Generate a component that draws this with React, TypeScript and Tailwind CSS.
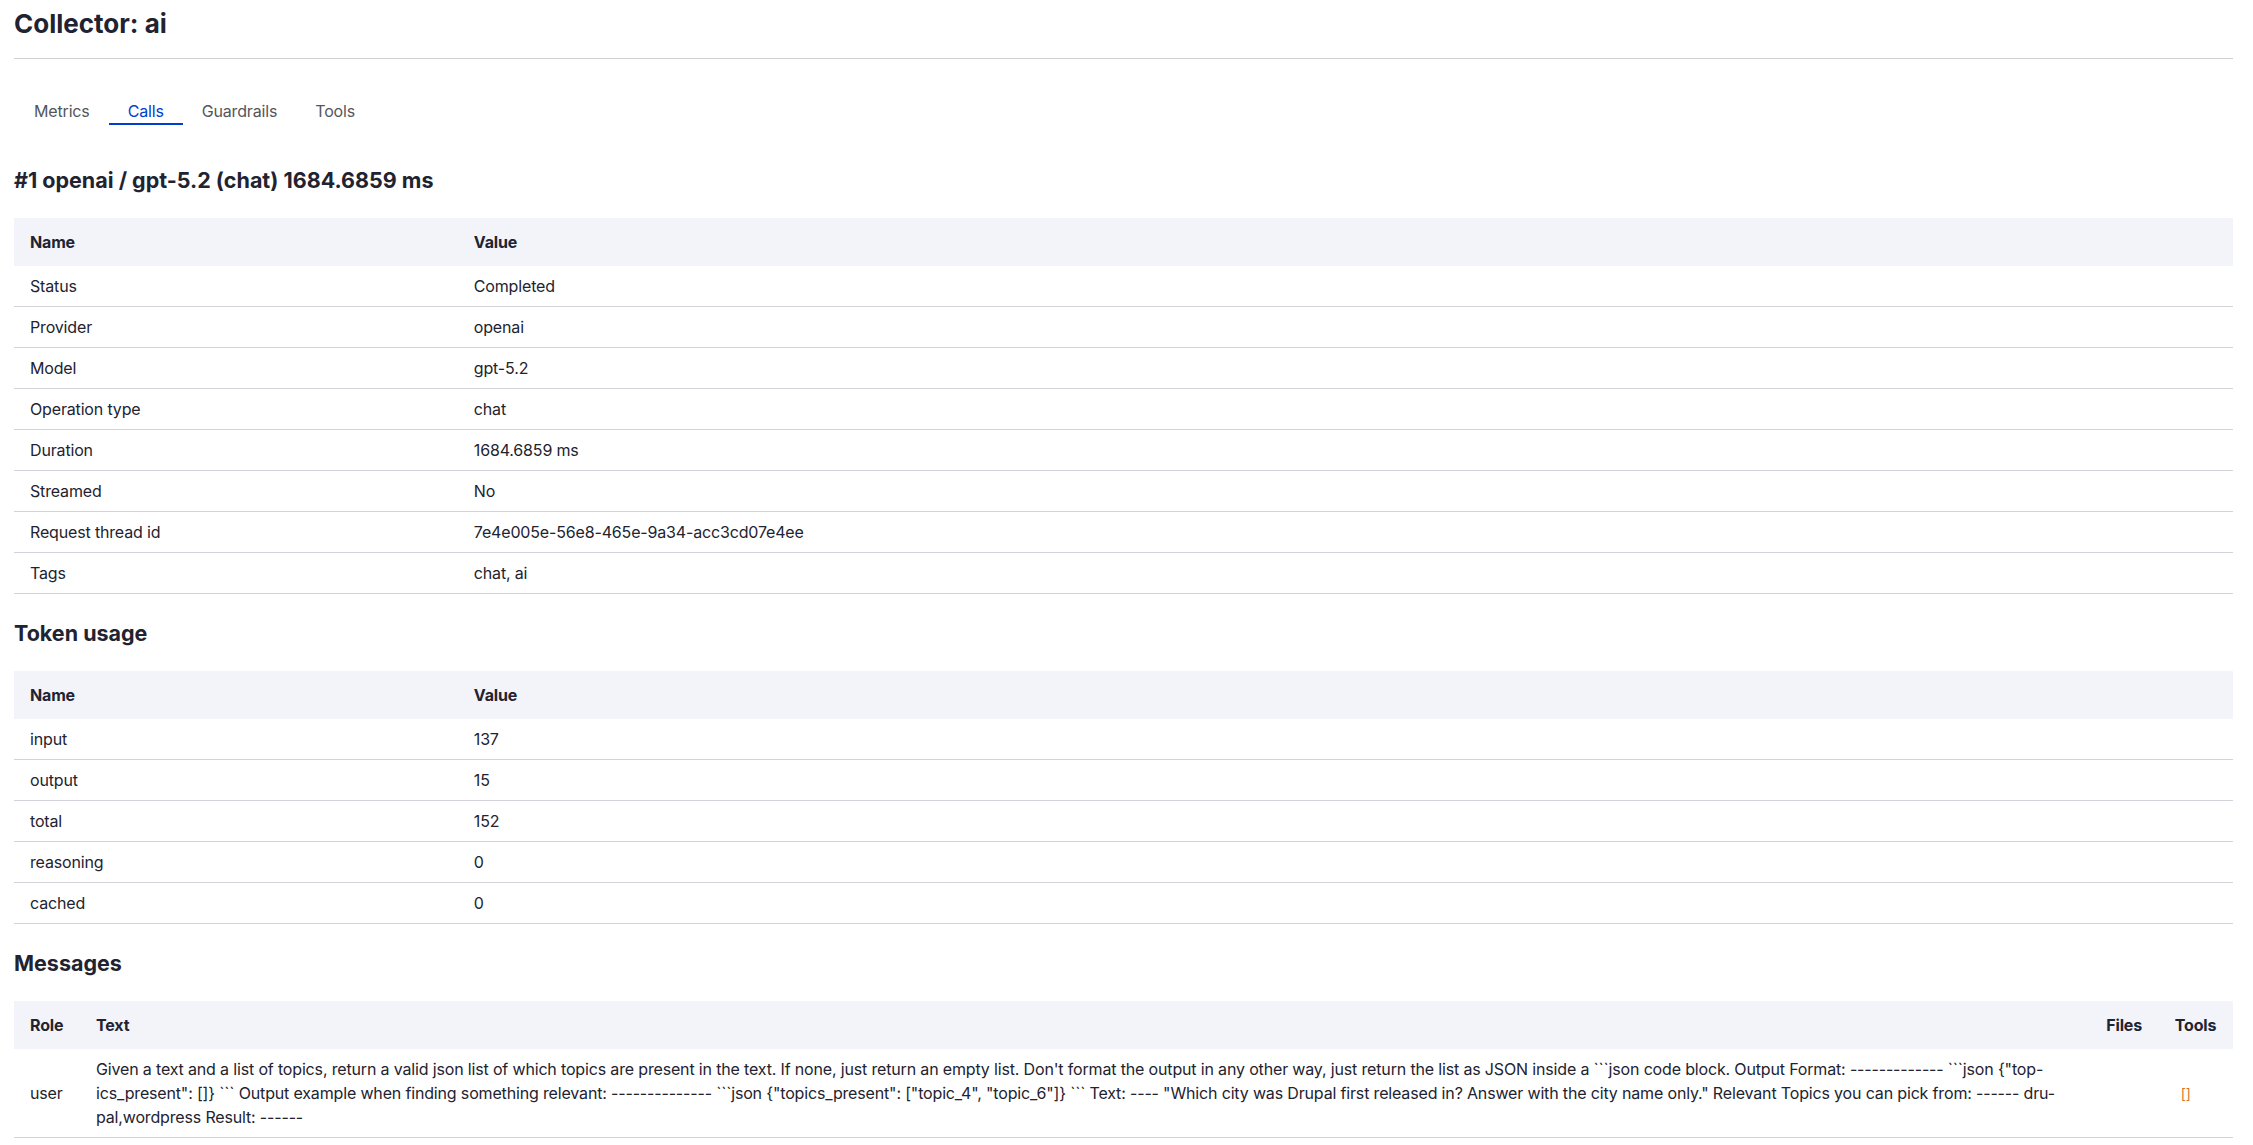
const callRows: [string, string][] = [
  ["Status", "Completed"],
  ["Provider", "openai"],
  ["Model", "gpt-5.2"],
  ["Operation type", "chat"],
  ["Duration", "1684.6859 ms"],
  ["Streamed", "No"],
  ["Request thread id", "7e4e005e-56e8-465e-9a34-acc3cd07e4ee"],
  ["Tags", "chat, ai"],
];

const tokenRows: [string, string][] = [
  ["input", "137"],
  ["output", "15"],
  ["total", "152"],
  ["reasoning", "0"],
  ["cached", "0"],
];

const tabs = ["Metrics", "Calls", "Guardrails", "Tools"];

function SectionTitle({ children }: { children: React.ReactNode }) {
  return (
    <h2 className="mt-[26px] mb-[25px] text-[21.5px] leading-[26px] font-bold tracking-normal">
      {children}
    </h2>
  );
}

function KeyValueTable({ rows }: { rows: [string, string][] }) {
  return (
    <table className="w-full border-collapse text-left">
      <thead>
        <tr className="bg-[#f3f4f9]">
          <th className="w-1/5 px-4 py-3 font-bold">Name</th>
          <th className="px-4 py-3 font-bold">Value</th>
        </tr>
      </thead>
      <tbody>
        {rows.map(([name, value]) => (
          <tr key={name} className="border-b border-[#d3d4d9]">
            <td className="px-4 py-2">{name}</td>
            <td className="px-4 py-2">{value}</td>
          </tr>
        ))}
      </tbody>
    </table>
  );
}

export default function App() {
  return (
    <div
      className="min-h-screen bg-white pl-[14px] pr-[20px] text-[16px] leading-6 tracking-[-0.01em] text-[#222330]"
      style={{ fontFamily: "Inter, 'Noto Sans', sans-serif" }}
    >
      <h1 className="pt-[7px] text-[26px] leading-[34px] font-bold tracking-normal">Collector: ai</h1>
      <hr className="mt-[17px] border-0 border-t border-[#cfd0d4]" />

      {/* tab bar */}
      <ul className="mt-[40px] flex pl-px">
        {tabs.map((tab) => (
          <li
            key={tab}
            className={
              tab === "Calls"
                ? "border-b-2 border-[#003ecc] px-[19px] text-[#003ecc]"
                : "border-b-2 border-transparent px-[19px] text-[#55565b]"
            }
          >
            {tab}
          </li>
        ))}
      </ul>

      <h2 className="mt-[42px] mb-[25px] text-[21.5px] leading-[26px] font-bold tracking-normal">
        #1 openai / gpt-5.2 (chat) 1684.6859 ms
      </h2>
      <KeyValueTable rows={callRows} />

      <SectionTitle>Token usage</SectionTitle>
      <KeyValueTable rows={tokenRows} />

      <SectionTitle>Messages</SectionTitle>
      <table className="w-full border-collapse text-left">
        <thead>
          <tr className="bg-[#f3f4f9]">
            <th className="px-4 py-3 font-bold">Role</th>
            <th className="px-4 py-3 font-bold">Text</th>
            <th className="px-4 py-3 font-bold">Files</th>
            <th className="px-4 py-3 font-bold">Tools</th>
          </tr>
        </thead>
        <tbody>
          <tr className="border-b border-[#d3d4d9]">
            <td className="px-4 py-2 align-middle">user</td>
            <td className="px-4 py-2">
              Given a text and a list of topics, return a valid json list of which topics are present in the
              text. If none, just return an empty list. Don't format the output in any other way, just return
              the list as JSON inside a ```json code block. Output Format: ------------- ```json {'{'}"top-
              <br />
              ics_present": []{'}'} ``` Output example when finding something relevant: -------------- ```json{" "}
              {'{'}"topics_present": ["topic_4", "topic_6"]{'}'} ``` Text: ---- "Which city was Drupal first
              released in? Answer with the city name only." Relevant Topics you can pick from: ------ dru-
              <br />
              pal,wordpress Result: ------
            </td>
            <td className="px-4 py-2"></td>
            <td className="px-4 py-2">
              <span className="pl-[6px] text-[14px] text-[#d4762c]">[]</span>
            </td>
          </tr>
        </tbody>
      </table>
    </div>
  );
}
